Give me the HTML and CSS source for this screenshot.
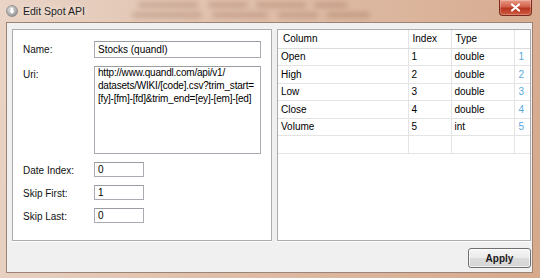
FILE: index.html
```html
<!DOCTYPE html>
<html lang="en">
<head>
  <meta charset="UTF-8" />
  <title>Edit Spot API</title>
  <link rel="stylesheet" href="styles.css">
</head>
<body>

  <div class="window">
    <!-- Title bar -->
    <div class="titlebar">
      <span class="app-icon">
        <svg width="12" height="12" viewBox="0 0 12 12">
          <defs>
            <radialGradient id="ig" cx="40%" cy="35%" r="70%">
              <stop offset="0" stop-color="#e4e4e4"/>
              <stop offset="1" stop-color="#8e8e8e"/>
            </radialGradient>
          </defs>
          <circle cx="6" cy="6" r="5.5" fill="url(#ig)" stroke="#7a7a7a" stroke-width="0.6"/>
          <path d="M4.9 2.8h2.2v3h1.6L6 8.9 3.3 5.8h1.6z" fill="#fff"/>
        </svg>
      </span>
      <span class="title">Edit Spot API</span>
      <div class="glass">
        <i style="left:0;top:2px;width:60px"></i>
        <i style="left:70px;top:2px;width:40px"></i>
        <i style="left:118px;top:2px;width:50px"></i>
        <i style="left:176px;top:2px;width:34px"></i>
        <i style="left:-6px;top:12px;width:70px"></i>
        <i style="left:74px;top:12px;width:56px"></i>
        <i style="left:140px;top:12px;width:40px"></i>
        <i style="left:188px;top:12px;width:44px"></i>
      </div>
      <div class="close-btn">
        <svg width="11" height="9" viewBox="0 0 11 9">
          <path d="M2 1.5l7 6M9 1.5l-7 6" stroke="#fff" stroke-width="2.2" stroke-linecap="round"/>
        </svg>
      </div>
    </div>

    <!-- Client area -->
    <div class="client">
      <div class="panels">
        <div class="panel form-panel">
          <div class="form-grid">
            <label>Name:</label>
            <div class="field">Stocks (quandl)</div>

            <label>Uri:</label>
            <div class="field area">http://www.quandl.com/api/v1/<br>datasets/WIKI/[code].csv?trim_start=<br>[fy]-[fm]-[fd]&amp;trim_end=[ey]-[em]-[ed]</div>

            <label>Date Index:</label>
            <div class="field small">0</div>

            <label>Skip First:</label>
            <div class="field small">1</div>

            <label>Skip Last:</label>
            <div class="field small">0</div>
          </div>
        </div>

        <div class="panel table-panel">
          <table class="grid">
            <thead>
              <tr><th class="c-name">Column</th><th class="c-idx">Index</th><th class="c-type">Type</th><th class="c-num"></th></tr>
            </thead>
            <tbody>
              <tr><td>Open</td><td>1</td><td>double</td><td class="num">1</td></tr>
              <tr><td>High</td><td>2</td><td>double</td><td class="num">2</td></tr>
              <tr><td>Low</td><td>3</td><td>double</td><td class="num">3</td></tr>
              <tr><td>Close</td><td>4</td><td>double</td><td class="num">4</td></tr>
              <tr><td>Volume</td><td>5</td><td>int</td><td class="num">5</td></tr>
              <tr><td></td><td></td><td></td><td class="num"></td></tr>
            </tbody>
          </table>
        </div>
      </div>

      <div class="actions">
        <button class="btn">Apply</button>
      </div>
    </div>
  </div>

</body>
</html>
```

FILE: styles.css
```css
/* Reset & Base */
* { margin:0; padding:0; box-sizing:border-box; }
body {
  font-family:'Liberation Sans',Arial,sans-serif;
  font-size:10px;
  color:#000;
  background:#d8b49c;
}

/* Window frame */
.window {
  width:540px; height:278px;
  display:flex; flex-direction:column;
  background:linear-gradient(100deg,#e9d4c6 0%,#dfbea9 45%,#d6a98c 100%);
}

/* Title bar */
.titlebar {
  position:relative;
  height:22px;
  display:flex; align-items:center;
  padding-left:6px;
}
.app-icon { display:flex; width:12px; height:12px; margin-top:-1px; }
.title {
  margin-left:5px;
  font-size:10.5px;
  color:#1e1e1e;
  text-shadow:0 0 6px rgba(255,255,255,0.9);
}
.glass {
  position:absolute; left:138px; top:0;
  width:240px; height:22px;
  filter:blur(2.6px);
}
.glass i {
  position:absolute; height:6px;
  background:rgba(120,70,45,0.22);
  border-radius:3px;
}
.close-btn {
  margin-left:auto; margin-right:8px;
  align-self:flex-start;
  width:33px; height:16px;
  display:flex; align-items:center; justify-content:center;
  background:linear-gradient(#e99a86 0%,#d2604a 45%,#b8361f 55%,#cf5a41 100%);
  border:1px solid #7d2a1c;
  border-top:none;
  border-radius:0 0 4px 4px;
  box-shadow:inset 0 0 0 1px rgba(255,255,255,0.25);
}

/* Client area */
.client {
  flex:1;
  margin:0 7px 5px 6px;
  border:1px solid #9b8476;
  background:#f0f0f0;
  padding:6px 1px 0 5px;
  display:flex; flex-direction:column;
}
.panels {
  display:flex; gap:5px;
  height:212px;
}
.panel {
  background:#fff;
  border:1px solid #acacac;
  box-shadow:0 1px 0 #fff;
}
.form-panel { width:260px; padding:11px 0 0 10px; }
.table-panel { flex:1; overflow:hidden; }

/* Form */
.form-grid {
  display:grid;
  grid-template-columns:71px 167px;
  row-gap:8px;
  align-items:start;
}
.form-grid label { padding-top:2px; line-height:13px; color:#111; }
.field {
  border:1px solid #a9abb2;
  border-top-color:#9a9ca3;
  background:#fff;
  height:17px;
  padding:0 3px;
  line-height:15px;
  white-space:nowrap;
  overflow:hidden;
}
.field.area { height:88px; line-height:12.8px; padding-top:0; letter-spacing:-0.2px; }
.field.small { width:50px; height:15px; line-height:13px; }

/* Table */
.grid {
  width:100%;
  border-collapse:collapse;
  table-layout:fixed;
}
.grid th, .grid td {
  text-align:left;
  font-weight:normal;
  border-right:1px solid #e4e4e4;
  border-bottom:1px solid #e4e4e4;
  white-space:nowrap;
  padding:0 0 0 3px;
}
.grid th { height:18px; padding-left:5px; border-bottom-color:#dcdcdc; }
.grid td { height:17.5px; }
.grid .c-name { width:130px; }
.grid .c-idx { width:43px; padding-left:4px; }
.grid .c-type { width:63px; padding-left:4px; }
.grid .c-num, .grid .num { border-right:none; }
.grid .num { color:#5aa7de; padding-left:4px; }

/* Buttons */
.actions {
  display:flex; justify-content:flex-end;
  margin-top:7px;
}
.btn {
  width:63px; height:20px;
  font-family:inherit; font-size:10px; font-weight:bold;
  color:#1a1a1a;
  background:linear-gradient(#f6f6f6 0%,#ebebeb 48%,#dcdcdc 52%,#d4d4d4 100%);
  border:1px solid #707070;
  border-radius:3px;
  box-shadow:inset 0 0 0 1px rgba(255,255,255,0.7);
  cursor:pointer;
}
```
